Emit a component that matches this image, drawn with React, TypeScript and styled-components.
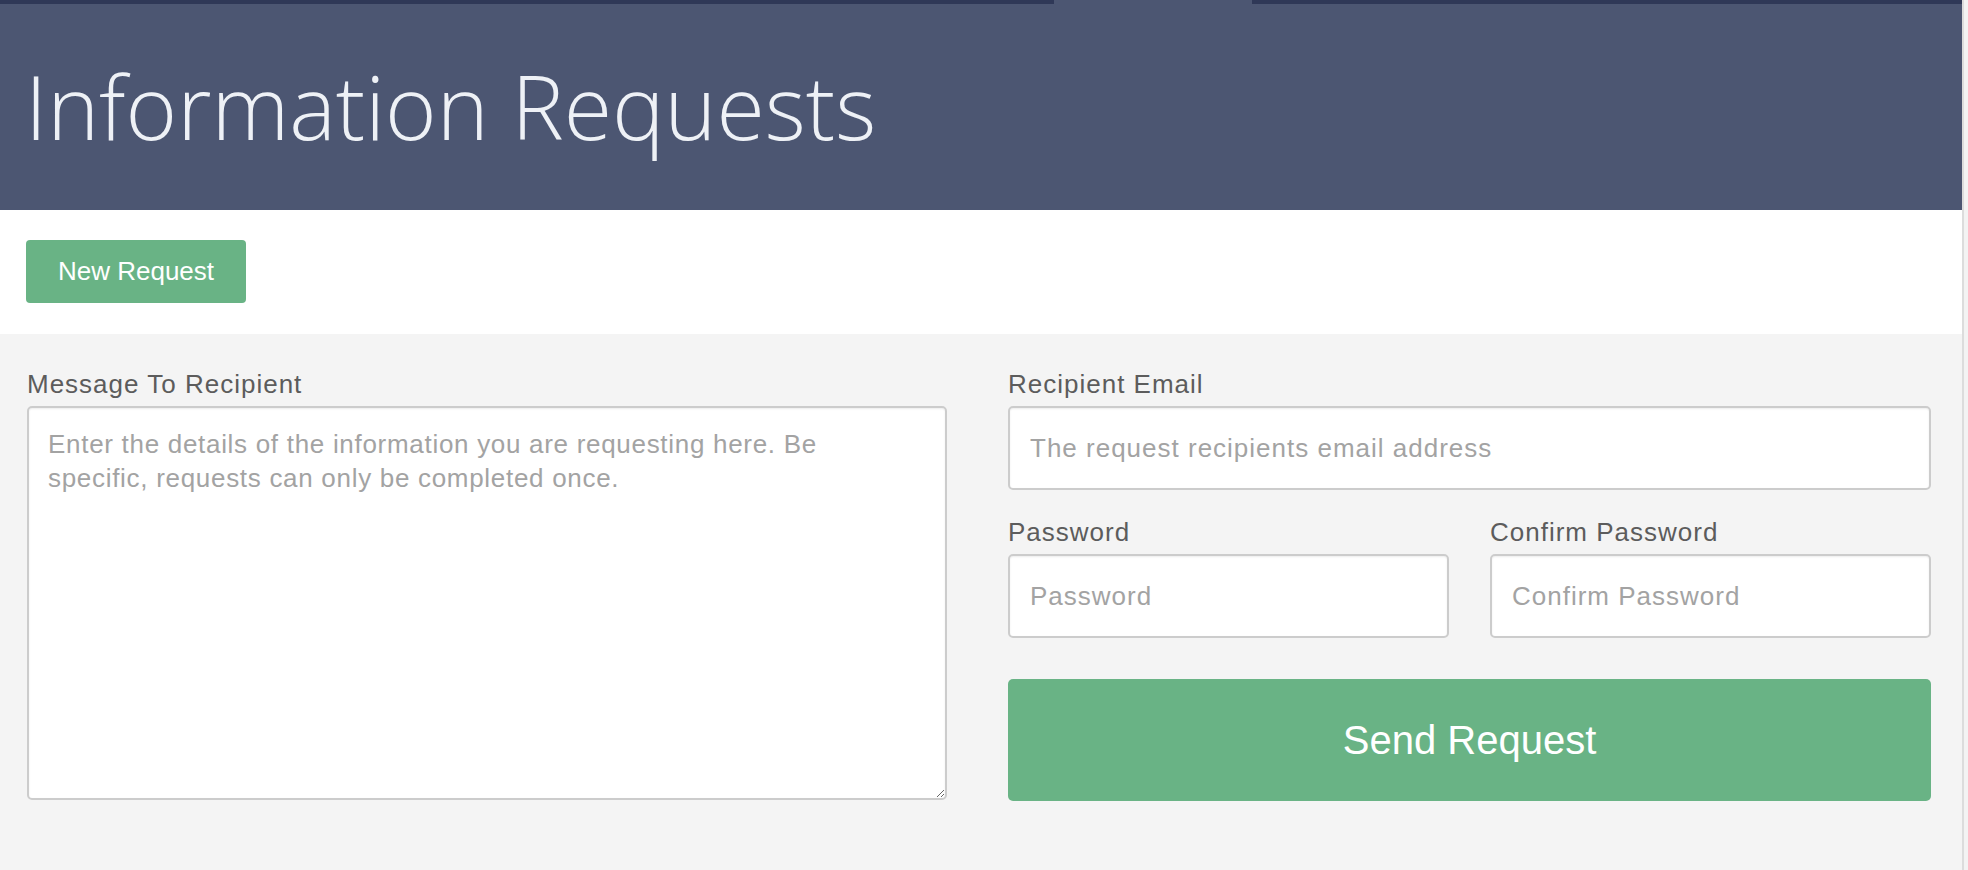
import React from "react";
import styled, { createGlobalStyle } from "styled-components";

const GlobalStyle = createGlobalStyle`
    html, body {
        margin: 0;
        padding: 0;
        height: 100%;
        background: #f4f4f4;
    }
    #root {
        min-height: 100%;
    }
    * {
        box-sizing: border-box;
    }
`;

const Shell = styled.div`
    display: flex;
    min-height: 870px;
`;

const Page = styled.div`
    flex: 1;
    display: flex;
    flex-direction: column;
    font-family: "Liberation Sans", Arial, sans-serif;
`;

const ScrollStrip = styled.div`
    width: 6px;
    flex: none;
    background: #f3f3f3;
    border-left: 2px solid #dcdcdc;
`;

const TopBar = styled.div`
    display: flex;
    height: 4px;
`;

const TopSegment = styled.div<{ $width?: number; $active?: boolean }>`
    flex: ${(p) => (p.$width ? `0 0 ${p.$width}px` : "1")};
    background: ${(p) => (p.$active ? "#4c5672" : "#2f3857")};
`;

const Header = styled.header`
    background: #4c5672;
    height: 206px;
    padding: 52px 26px 0 25px;
`;

const Title = styled.h1`
    margin: 0;
    font-family: "Open Sans", sans-serif;
    font-weight: 300;
    font-size: 88px;
    line-height: 100px;
    color: #eef1f6;
`;

const Toolbar = styled.div`
    background: #ffffff;
    padding: 30px 27px 31px 26px;
`;

const Button = styled.button<{ $large?: boolean }>`
    display: inline-flex;
    align-items: center;
    justify-content: center;
    border: none;
    border-radius: ${(p) => (p.$large ? "5px" : "4px")};
    background: #69b385;
    color: #ffffff;
    font-family: "Liberation Sans", Arial, sans-serif;
    font-size: ${(p) => (p.$large ? "40px" : "26px")};
    height: ${(p) => (p.$large ? "122px" : "63px")};
    width: ${(p) => (p.$large ? "100%" : "220px")};
    padding: 0;
    cursor: pointer;
`;

const FormArea = styled.section`
    flex: 1;
    background: #f4f4f4;
    padding: 35px 31px 40px 27px;
    display: grid;
    grid-template-columns: 920px 1fr;
    column-gap: 61px;
    align-items: start;
`;

const Column = styled.div`
    display: flex;
    flex-direction: column;
`;

const Row = styled.div`
    display: grid;
    grid-template-columns: 1fr 1fr;
    column-gap: 41px;
`;

const Field = styled.div<{ $gapAfter?: number }>`
    display: flex;
    flex-direction: column;
    margin-bottom: ${(p) => p.$gapAfter ?? 0}px;
`;

const Label = styled.label`
    font-size: 26px;
    line-height: 30px;
    letter-spacing: 1px;
    color: #5c5c5c;
    margin-bottom: 7px;
`;

const inputBase = `
    width: 100%;
    border: 2px solid #cccccc;
    border-radius: 5px;
    background: #ffffff;
    font-family: "Liberation Sans", Arial, sans-serif;
    font-size: 26px;
    color: #555555;
    box-shadow: inset 0 1px 2px rgba(0, 0, 0, 0.08);
    outline: none;
    &::placeholder {
        color: #a3a3a3;
    }
`;

const Input = styled.input`
    ${inputBase}
    height: 84px;
    padding: 0 20px;
    letter-spacing: 1px;
`;

const TextArea = styled.textarea`
    ${inputBase}
    height: 394px;
    padding: 19px 34px 16px 19px;
    line-height: 34px;
    letter-spacing: 0.7px;
    resize: both;
`;

export default function App() {
    return (
        <>
            <GlobalStyle />
            <Shell>
                <Page>
                    <TopBar>
                        <TopSegment $width={1054} />
                        <TopSegment $width={198} $active />
                        <TopSegment />
                    </TopBar>
                    <Header>
                        <Title>Information Requests</Title>
                    </Header>
                    <Toolbar>
                        <Button>New Request</Button>
                    </Toolbar>
                    <FormArea>
                        <Column>
                            <Field>
                                <Label htmlFor="message">Message To Recipient</Label>
                                <TextArea
                                    id="message"
                                    placeholder="Enter the details of the information you are requesting here. Be specific, requests can only be completed once."
                                />
                            </Field>
                        </Column>
                        <Column>
                            <Field $gapAfter={27}>
                                <Label htmlFor="email">Recipient Email</Label>
                                <Input
                                    id="email"
                                    type="email"
                                    placeholder="The request recipients email address"
                                />
                            </Field>
                            <Row>
                                <Field $gapAfter={41}>
                                    <Label htmlFor="password">Password</Label>
                                    <Input id="password" type="password" placeholder="Password" />
                                </Field>
                                <Field $gapAfter={41}>
                                    <Label htmlFor="confirm">Confirm Password</Label>
                                    <Input
                                        id="confirm"
                                        type="password"
                                        placeholder="Confirm Password"
                                    />
                                </Field>
                            </Row>
                            <Button $large>Send Request</Button>
                        </Column>
                    </FormArea>
                </Page>
                <ScrollStrip />
            </Shell>
        </>
    );
}
